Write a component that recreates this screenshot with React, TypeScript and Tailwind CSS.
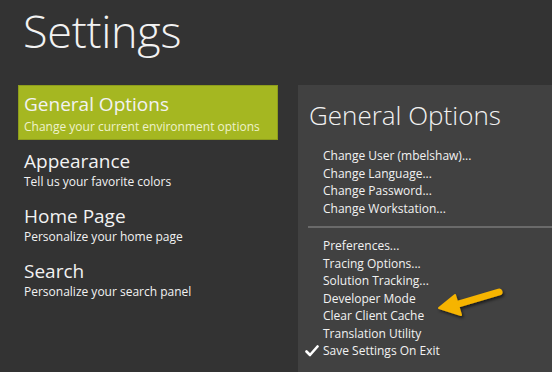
import React from "react";

const navItems = [
  { title: "General Options", sub: "Change your current environment options", active: true },
  { title: "Appearance", sub: "Tell us your favorite colors" },
  { title: "Home Page", sub: "Personalize your home page" },
  { title: "Search", sub: "Personalize your search panel" },
];

const topLinks = ["Change User (mbelshaw)...", "Change Language...", "Change Password...", "Change Workstation..."];
const bottomLinks = ["Preferences...", "Tracing Options...", "Solution Tracking...", "Developer Mode", "Clear Client Cache", "Translation Utility"];

const App = () => {
  return (
    <div className="w-[552px] h-[372px] bg-[#333333] overflow-hidden text-[#f2f2f2] font-['Open_Sans',sans-serif] flex flex-col">
      <h1 className="pl-[23px] h-[85px] text-[45px] font-light leading-[61px] tracking-[-0.3px]">Settings</h1>

      <div className="flex flex-1">
        {/* left nav */}
        <div className="w-[298px] pl-[18px] pr-[20px] flex flex-col">
          {navItems.map((item) =>
            item.active ? (
              <div key={item.title} className="h-[55px] bg-[#a5b721] border border-[#8e9d1c] pl-[5px] pt-[6px]">
                <div className="text-[19px] leading-[24px]">{item.title}</div>
                <div className="mt-[1px] text-[12px] leading-[20px] text-[#eef2cc]">{item.sub}</div>
              </div>
            ) : (
              <div key={item.title} className="pl-[6px] pt-[9px] h-[55px]">
                <div className="text-[19px] leading-[24px]">{item.title}</div>
                <div className="text-[12px] leading-[18px]">{item.sub}</div>
              </div>
            )
          )}
        </div>

        {/* right panel */}
        <div className="flex-1 bg-[#414141] pl-[10px] relative">
          <h2 className="pt-[13px] text-[26px] font-light leading-[34px] pl-[1px]">General Options</h2>
          <div className="mt-[15px] pl-[15px] flex flex-col text-[12px] leading-[17.5px]">
            {topLinks.map((l) => (
              <div key={l}>{l}</div>
            ))}
          </div>
          <div className="mt-[9px] h-[2px] bg-[#6a6a6a]" />
          <div className="mt-[9px] pl-[15px] flex flex-col text-[12px] leading-[17.5px]">
            {bottomLinks.map((l) => (
              <div key={l}>{l}</div>
            ))}
            <div className="relative">
              <svg className="absolute left-[-18px] top-[3px]" width="14" height="12" viewBox="0 0 14 12">
                <path d="M1.5 6.5 L5 10 L12.5 1.5" stroke="#ffffff" strokeWidth="2.6" fill="none" strokeLinecap="round" strokeLinejoin="round" />
              </svg>
              Save Settings On Exit
            </div>
          </div>

          {/* callout arrow */}
          <svg className="absolute left-[137px] top-[199px]" width="76" height="40" viewBox="0 0 76 40">
            <defs>
              <filter id="sh" x="-20%" y="-40%" width="150%" height="190%">
                <feDropShadow dx="1.5" dy="2" stdDeviation="1.5" floodColor="#000" floodOpacity="0.6" />
              </filter>
            </defs>
            <g filter="url(#sh)">
              <path d="M64 8 L20 21" stroke="#f6b400" strokeWidth="7" strokeLinecap="round" fill="none" />
              <path d="M4 24 L20 11 L26 31 Z" fill="#f6b400" stroke="#f6b400" strokeWidth="2" strokeLinejoin="round" />
            </g>
          </svg>
        </div>
      </div>
    </div>
  );
};

export default App;
